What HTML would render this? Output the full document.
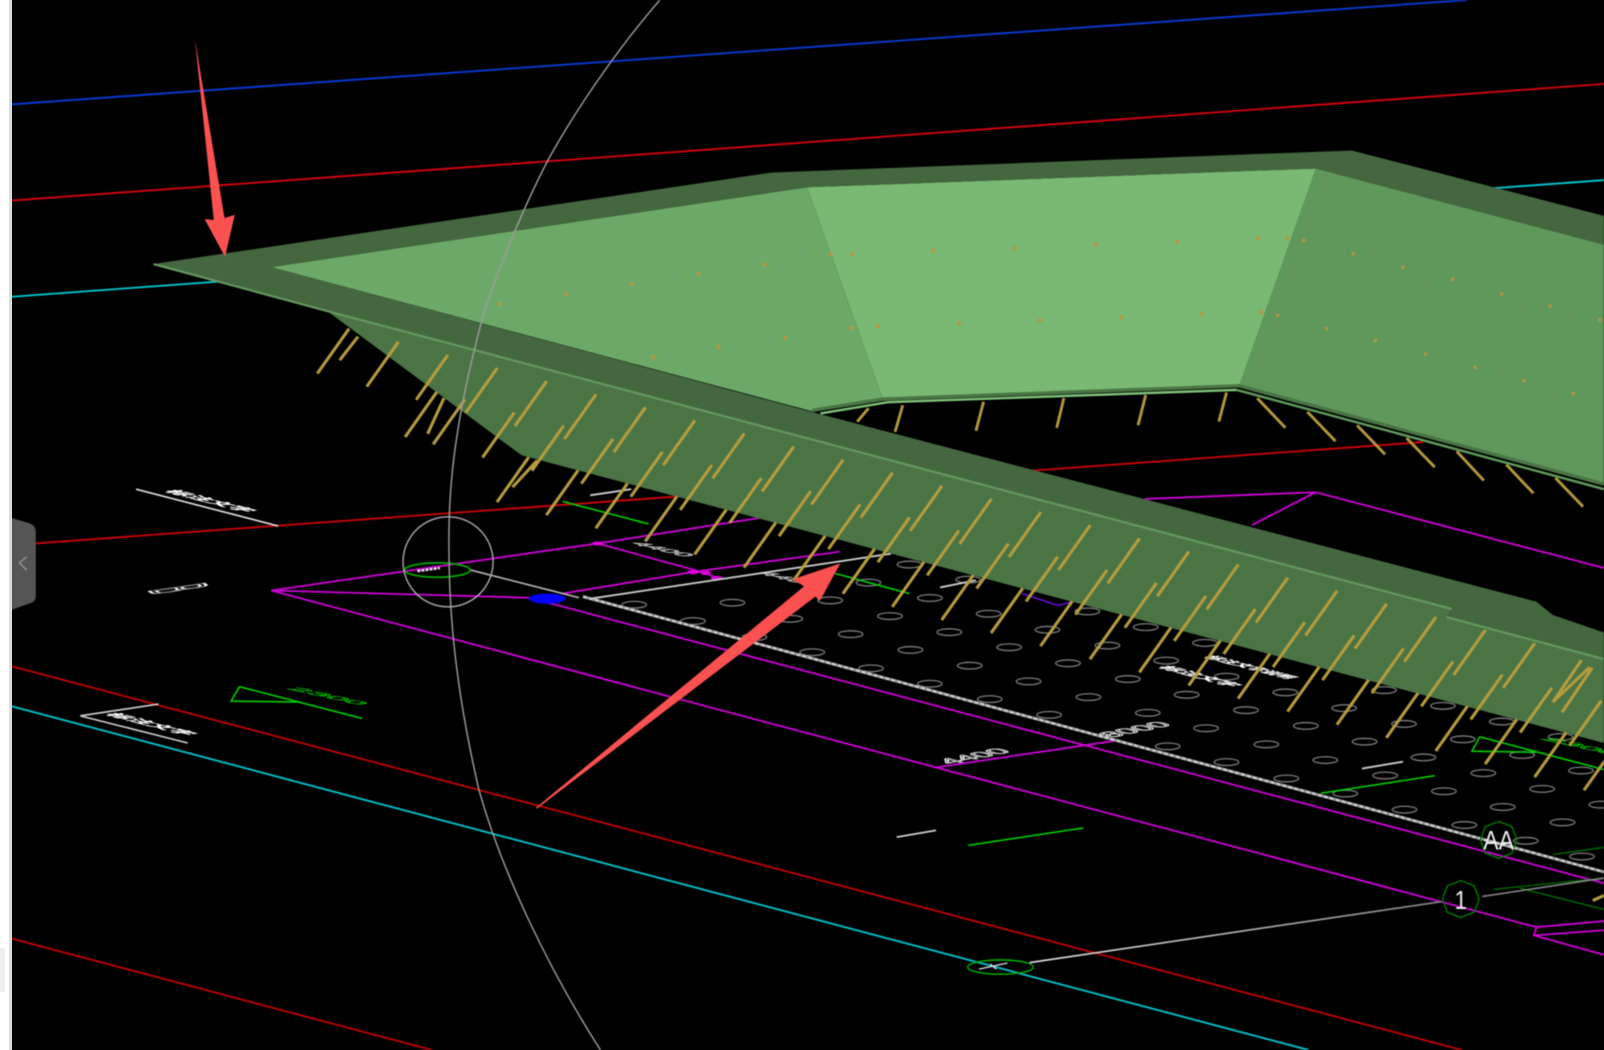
<!DOCTYPE html>
<html><head><meta charset="utf-8"><title>CAD</title>
<style>
html,body{margin:0;padding:0;background:#000;width:1604px;height:1050px;overflow:hidden}
svg{position:absolute;left:0;top:0;display:block;filter:blur(.6px)}
.strip{position:absolute;left:0;top:0;width:9px;height:1050px;background:#fff;border-right:3px solid #ddd}
.box{position:absolute;left:0;top:948px;width:5px;height:44px;background:#eee}
text{font-family:"Liberation Sans","Noto Sans CJK SC",sans-serif}
.cn{fill:#fff;stroke:#fff;stroke-width:.45;font-weight:700;font-size:13px}
.num{fill:none;stroke:#eee;stroke-width:.85;font-size:16px}
.gn{fill:none;stroke:#00e000;stroke-width:.85;font-size:16px}
.ov ellipse{vector-effect:non-scaling-stroke}
</style></head><body>
<svg width="1604" height="1050" viewBox="0 0 1568 1026" preserveAspectRatio="none" xmlns="http://www.w3.org/2000/svg" fill="none">
<defs><linearGradient id="gl" gradientUnits="userSpaceOnUse" x1="1006" y1="940" x2="1409" y2="881"><stop offset="0" stop-color="#d8d8d8"/><stop offset="1" stop-color="#808080"/></linearGradient></defs>
<!-- background lines -->
<path d="M11 102L1434 0" stroke="#0838d0" stroke-width="1.900"/>
<path d="M11 196L1568 82" stroke="#d00010" stroke-width="1.900"/>
<path d="M11 290L1568 176" stroke="#00c0c8" stroke-width="1.900"/>
<path d="M34 531L1391 432" stroke="#c80008" stroke-width="1.900"/>
<path d="M11 651L1429 1026" stroke="#b80000" stroke-width="1.900"/>
<path d="M11 690L1279 1026" stroke="#00bcc4" stroke-width="1.900"/>
<path d="M11 917L422 1026" stroke="#b80000" stroke-width="1.900"/>
<!-- magenta -->
<g stroke="#cc00d4" stroke-width="1.800">
<path d="M265 577L584 531L743 506"/>
<path d="M265 577L517 584"/>
<path d="M265 577L1502 906L1568 900M1502 906L1499.500 914L1568 909M1499.500 914L1568 933"/>
<path d="M517 584L1568 863"/>
<path d="M584 531L690 560L701 565"/>
<path d="M550 580L677 559L821 539"/>
<path d="M1119 487.500L1286 481L1224 513M1286 481L1568 555"/>
<path d="M914 750L1089 724"/>
</g>
<path d="M999 580L1034 591.500L1054 586.600" stroke="#6a10e0" stroke-width="1.500"/>
<ellipse cx="535" cy="585" rx="18" ry="5" fill="#0000ff"/>
<g fill="#e000e0"><ellipse cx="584.500" cy="531" rx="6" ry="2"/><ellipse cx="677.500" cy="559" rx="6" ry="2"/><ellipse cx="690" cy="560" rx="5" ry="2"/><ellipse cx="701" cy="565" rx="6" ry="2"/></g>
<!-- ovals -->
<g class="ov" transform="translate(784 513) scale(.5 .3272)" stroke="#7c7c7c" stroke-width="1.300">
<ellipse cx="210" cy="118" rx="24" ry="10"/><ellipse cx="325" cy="163" rx="24" ry="10"/><ellipse cx="250" cy="218" rx="24" ry="10"/><ellipse cx="130" cy="172" rx="24" ry="10"/><ellipse cx="55" cy="225" rx="24" ry="10"/><ellipse cx="172" cy="272" rx="24" ry="10"/><ellipse cx="365" cy="265" rx="24" ry="10"/><ellipse cx="95" cy="326" rx="24" ry="10"/><ellipse cx="288" cy="320" rx="24" ry="10"/><ellipse cx="480" cy="313" rx="24" ry="10"/><ellipse cx="558" cy="258" rx="24" ry="10"/><ellipse cx="672" cy="305" rx="24" ry="10"/><ellipse cx="597" cy="360" rx="24" ry="10"/><ellipse cx="405" cy="365" rx="24" ry="10"/><ellipse cx="212" cy="373" rx="24" ry="10"/><ellipse cx="20" cy="380" rx="24" ry="10"/><ellipse cx="135" cy="428" rx="24" ry="10"/><ellipse cx="328" cy="420" rx="24" ry="10"/><ellipse cx="520" cy="413" rx="24" ry="10"/><ellipse cx="788" cy="352" rx="24" ry="10"/><ellipse cx="712" cy="405" rx="24" ry="10"/><ellipse cx="637" cy="460" rx="24" ry="10"/><ellipse cx="443" cy="467" rx="24" ry="10"/><ellipse cx="250" cy="474" rx="24" ry="10"/><ellipse cx="367" cy="520" rx="24" ry="10"/><ellipse cx="560" cy="514" rx="24" ry="10"/><ellipse cx="752" cy="507" rx="24" ry="10"/><ellipse cx="830" cy="453" rx="24" ry="10"/><ellipse cx="945" cy="500" rx="24" ry="10"/><ellipse cx="868" cy="553" rx="24" ry="10"/><ellipse cx="676" cy="561" rx="24" ry="10"/><ellipse cx="483" cy="567" rx="24" ry="10"/><ellipse cx="790" cy="607" rx="24" ry="10"/><ellipse cx="985" cy="600" rx="24" ry="10"/><ellipse cx="1060" cy="547" rx="24" ry="10"/><ellipse cx="1138" cy="493" rx="24" ry="10"/><ellipse cx="1253" cy="540" rx="24" ry="10"/><ellipse cx="1177" cy="594" rx="24" ry="10"/><ellipse cx="1100" cy="647" rx="24" ry="10"/><ellipse cx="908" cy="655" rx="24" ry="10"/><ellipse cx="715" cy="661" rx="24" ry="10"/><ellipse cx="830" cy="708" rx="24" ry="10"/><ellipse cx="1023" cy="702" rx="24" ry="10"/><ellipse cx="1215" cy="694" rx="24" ry="10"/><ellipse cx="1292" cy="640" rx="24" ry="10"/><ellipse cx="1368" cy="587" rx="24" ry="10"/><ellipse cx="1483" cy="633" rx="24" ry="10"/><ellipse cx="1408" cy="687" rx="24" ry="10"/><ellipse cx="1332" cy="741" rx="24" ry="10"/><ellipse cx="1140" cy="748" rx="24" ry="10"/><ellipse cx="947" cy="757" rx="24" ry="10"/><ellipse cx="1062" cy="802" rx="24" ry="10"/><ellipse cx="1255" cy="795" rx="24" ry="10"/><ellipse cx="1447" cy="788" rx="24" ry="10"/><ellipse cx="1523" cy="733" rx="24" ry="10"/><ellipse cx="1563" cy="835" rx="24" ry="10"/><ellipse cx="1370" cy="842" rx="24" ry="10"/><ellipse cx="1178" cy="850" rx="24" ry="10"/><ellipse cx="1295" cy="896" rx="24" ry="10"/><ellipse cx="1487" cy="888" rx="24" ry="10"/><ellipse cx="1415" cy="943" rx="24" ry="10"/><ellipse cx="1525" cy="990" rx="24" ry="10"/>
<ellipse cx="-328" cy="238" rx="24" ry="10"/><ellipse cx="-136" cy="232" rx="24" ry="10"/><ellipse cx="-213" cy="287" rx="24" ry="10"/><ellipse cx="-23" cy="280" rx="24" ry="10"/><ellipse cx="-93" cy="335" rx="24" ry="10"/>
</g>
<!-- road edge -->
<path d="M460 557L566 584" stroke="#b5b5b5" stroke-width="1.600"/>
<path d="M570 583L1568 852" stroke="#8a8a8a" stroke-width="3"/>
<path d="M570 583L1568 852" stroke="#cfcfcf" stroke-width="2.200" stroke-dasharray="4 2"/>
<path d="M577 585L871 541" stroke="#c8c8c8" stroke-width="1.800"/>
<path d="M133 478L272 514" stroke="#ddd" stroke-width="1.600"/>
<path d="M155 688L78.500 699.500L183.500 726" stroke="#ccc" stroke-width="1.600"/>
<path d="M577 484L617 478M876.500 818L915 811.400M1331.500 751L1371.500 744.300M919 574L954 567" stroke="#ccc" stroke-width="1.800"/>
<!-- green cad -->
<g stroke="#00cc00" stroke-width="1.600">
<path d="M550 490L634 512M816.500 560.400L889 580M946.500 826L1059 809M1291.500 775L1402.500 758"/>
<path d="M234 671L226 685L290 686M234 671L354 702"/>
<path d="M1446.500 720L1439 734L1501.500 735M1446.500 720L1568 752"/>
</g>
<g stroke="#006800" stroke-width="1.400"><path d="M1486 868L1568 888.600M1518 835L1568 828M1460 869L1568 858"/></g>
<ellipse cx="427.500" cy="557" rx="32" ry="7" stroke="#00a800" stroke-width="1.700"/>
<ellipse cx="978" cy="945" rx="32" ry="7" stroke="#00a800" stroke-width="1.500"/>
<path d="M408 558L430 555" stroke="#f0d8f0" stroke-width="2.500" stroke-dasharray="3 1"/>
<path d="M957 947L985 941M968 942L974 947" stroke="#ddd" stroke-width="1.300"/>
<path d="M1006.500 940.600L1409 881" stroke="url(#gl)" stroke-width="1.700"/>
<path d="M1449 876L1568 858" stroke="#8a8a8a" stroke-width="1.500"/>
<!-- labels -->
<text class="cn" transform="matrix(1.55 .4 -1.2 .18 160 480)">标注文字</text>
<text class="cn" transform="matrix(1.55 .4 -1.2 .18 102 698)">标注文字</text>
<text class="cn" transform="matrix(1.4 .37 -1.2 .18 1131 652)">标注文字</text>
<text class="cn" transform="matrix(1.15 .3 -1.2 .18 1176 642)" style="font-size:12px">标注文字说明</text>
<text class="cn" transform="matrix(1.15 .3 -1.2 .18 1224 632)" style="font-size:12px">标注文字说明</text>
<text class="num" style="font-size:14px;stroke-width:.6" transform="matrix(.7 .45 -5.500 .8 145 577)">B</text>
<text class="num" transform="matrix(1.7 -.35 1.3 .35 929 747)">4400</text>
<text class="num" transform="matrix(1.7 -.35 1.3 .35 1086 721)">8000</text>
<text class="num" transform="matrix(1.5 .37 -1 .15 616 531)">4400</text>
<text class="num" transform="matrix(1.5 .37 -1 .15 740 560)">4400</text>
<text class="gn" transform="matrix(2 .45 -1 .15 280 673)">2300</text>
<text class="gn" transform="matrix(2 .45 -1 .15 1505 722)">2300</text>
<!-- back bars -->
<path d="M849 399L838 412M882.500 396L875 422M961.500 392.600L954 421M1040 389L1033 418M1120 386L1112.500 415.500M1199 383.500L1191.500 412M1229 389L1256.500 418M1278 402.500L1305.500 431M1326.500 415.500L1354 444M1375 428L1402.500 456.500M1424 441L1450.500 469.500M1472.500 454L1499 482M1520.500 467L1547.500 495" stroke="#b5983c" stroke-width="2.800"/>
<!-- panels -->
<polygon points="265,261 789,183 863,390 794,402" fill="#6ca867"/>
<polygon points="789,183 1286.500,164.600 1211.500,377 863,390" fill="#79b973"/>
<polygon points="1286.500,164.600 1568,239 1568,473 1211.500,377" fill="#60985c"/>
<path d="M794 401L863 390L1211.500 377L1568 473" stroke="#4a7544" stroke-width="3.400"/>
<path d="M802 404L868 393L1209 381" stroke="#7ec078" stroke-width="2.400"/>
<path d="M1209 381L1568 478" stroke="#5f9a5b" stroke-width="2.400"/>
<!-- panel dots -->
<g fill="#b8963f"><circle cx="488.500" cy="297" r="2"/><circle cx="553.500" cy="287" r="2"/><circle cx="618" cy="277.500" r="2"/><circle cx="683" cy="267.600" r="2"/><circle cx="747.500" cy="258.500" r="2"/><circle cx="638.500" cy="349" r="2"/><circle cx="702.500" cy="339" r="2"/><circle cx="767.500" cy="330" r="2"/><circle cx="812" cy="248.700" r="2"/><circle cx="833" cy="248" r="2"/><circle cx="912" cy="245" r="2"/><circle cx="991.500" cy="242.500" r="2"/><circle cx="1071.500" cy="239" r="2"/><circle cx="1150.500" cy="236" r="2"/><circle cx="1230" cy="233" r="2"/><circle cx="1258" cy="232.600" r="2"/><circle cx="1274.500" cy="235" r="1.700"/><circle cx="1323" cy="248" r="1.700"/><circle cx="1371.500" cy="261" r="1.700"/><circle cx="1420" cy="273" r="1.700"/><circle cx="1468" cy="287" r="1.700"/><circle cx="1515.500" cy="299" r="1.700"/><circle cx="1564" cy="312.500" r="1.700"/><circle cx="832.500" cy="320.600" r="2"/><circle cx="858" cy="319" r="2"/><circle cx="937.500" cy="315.800" r="2"/><circle cx="1016.500" cy="313" r="2"/><circle cx="1096" cy="310" r="2"/><circle cx="1175" cy="307" r="2"/><circle cx="1232.500" cy="305" r="2"/><circle cx="1249" cy="308" r="1.700"/><circle cx="1297" cy="321" r="1.700"/><circle cx="1344.500" cy="333" r="1.700"/><circle cx="1393.500" cy="346" r="1.700"/><circle cx="1442" cy="359" r="1.700"/><circle cx="1490" cy="372" r="1.700"/><circle cx="1538" cy="384.500" r="1.700"/></g>
<!-- front face -->
<polygon points="320,304 784,420 1414,588 1568,630 1568,726 510,445" fill="#4b7445"/>
<!-- rim -->
<polygon points="150,258 755,168.500 1321.500,147 1568,211 1568,239 1286.500,164.600 789,183 265,261 784,400 1219,514 1502,588 1518,601 1568,618 1568,644 1414,603 1419,595 784,426 320,304" fill="#44673f"/>
<path d="M150 258L320 304L1419 595M1414 603L1568 644" stroke="#639a5e" stroke-width="2.100"/>
<!-- front bars -->
<path stroke="#b59c3c" stroke-width="3" d="M341.200 321.200l-31 43.800M389.500 334l-31 43.800M437.800 346.800l-31 43.800M486.100 359.600l-31 43.800M534.400 372.400l-31 43.800M582.700 385.200l-31 43.800M631 398l-31 43.800M679.300 410.800l-31 43.800M727.600 423.600l-31 43.800M775.900 436.400l-31 43.800M824.200 449.200l-31 43.800M872.500 462l-31 43.800M920.800 474.800l-31 43.800M969.100 487.600l-31 43.800M1017.400 500.400l-31 43.800M1065.700 513.200l-31 43.800M1114 526l-31 43.800M1162.300 538.800l-31 43.800M1210.600 551.600l-31 43.800M1258.900 564.400l-31 43.800M1307.200 577.200l-31 43.800M1355.500 590l-31 43.800M1403.800 602.800l-31 43.800M1452.100 615.600l-31 43.800M1500.400 628.400l-31 43.800M1546 645L1518 686L1554 652M1556.500 652.500L1527 696
M454.400 390.400l-31 43.800M502.700 403.200l-31 43.800M551 416l-31 43.800M599.300 428.800l-31 43.800M647.600 441.600l-31 43.800M695.900 454.400l-31 43.800M744.200 467.200l-31 43.800M792.500 480l-31 43.800M840.800 492.800l-31 43.800M889.100 505.600l-31 43.800M937.400 518.400l-31 43.800M985.700 531.200l-31 43.800M1034 544l-31 43.800M1082.300 556.800l-31 43.800M1130.600 569.600l-31 43.800M1178.900 582.400l-31 43.800M1227.200 595.200l-31 43.800M1275.500 608l-31 43.800M1323.800 620.800l-31 43.800M1372.100 633.600l-31 43.800M1420.400 646.400l-31 43.800M1468.700 659.200l-31 43.800M1517 672l-31 43.800M1565.300 684.800l-31 43.800
M516.800 446.800l-31 43.800M565.100 459.600l-31 43.800M613.400 472.400l-31 43.800M661.700 485.200l-31 43.800M710 498l-31 43.800M758.300 510.800l-31 43.800M806.600 523.600l-31 43.800M854.900 536.400l-31 43.800M903.200 549.200l-31 43.800M951.500 562l-31 43.800M999.800 574.800l-31 43.800M1048.100 587.600l-31 43.800M1096.400 600.400l-31 43.800M1144.700 613.200l-31 43.800M1193 626l-31 43.800M1241.300 638.800l-31 43.800M1289.600 651.600l-31 43.800M1337.900 664.400l-31 43.800M1386.200 677.200l-31 43.800M1434.500 690l-31 43.800M1482.800 702.800l-31 43.800M1531.100 715.600l-31 43.800M1579.400 728.400l-31 43.800
M350 329L332 352M427 383L396 427M434 389L418 424M525 450L501 476M1557 880L1568 875"/>
<!-- hexagon markers -->
<polygon points="1465,802.700 1478,807.700 1483,820.700 1478,833.700 1465,838.700 1452,833.700 1447,820.700 1452,807.700" stroke="#007800" stroke-width="1.400"/>
<polygon points="1428,860.500 1441,865.500 1446,878.500 1441,891.500 1428,896.500 1415,891.500 1410,878.500 1415,865.500" stroke="#007800" stroke-width="1.400"/>
<text x="1450" y="830" style="fill:#eee;font-size:26px" textLength="30" lengthAdjust="spacingAndGlyphs">AA</text>
<text x="1422" y="888" style="fill:#eee;font-size:25px" textLength="12" lengthAdjust="spacingAndGlyphs">1</text>
<!-- arc and circle -->
<path d="M645 0C612 38 570 95 537 154C510 205 480 280 470 317C452 385 440 450 439 513C438 570 440 650 468 771C490 850 535 945 587 1026" stroke="#9c9c9c" stroke-width="1.400"/>
<circle cx="438" cy="549" r="44" stroke="#a8a8a8" stroke-width="1.400"/>
<!-- handle -->
<path d="M11 506L28 511Q35 513 35 520V583Q35 588 28 590L11 596Z" fill="#555"/>
<path d="M26 544L19 550L26 557" stroke="#8a8a8a" stroke-width="1.700"/>
<!-- red arrows -->
<polygon points="190.500,38 219.500,213 229.500,210 220,251 200,214 209,215" fill="#fb5151"/>
<polygon points="523.500,789.500 786,573 775,566 821.500,550.500 801.500,587 797,583 525,790" fill="#fb5151"/>
</svg>
<div class="strip"></div><div class="box"></div>
</body></html>
